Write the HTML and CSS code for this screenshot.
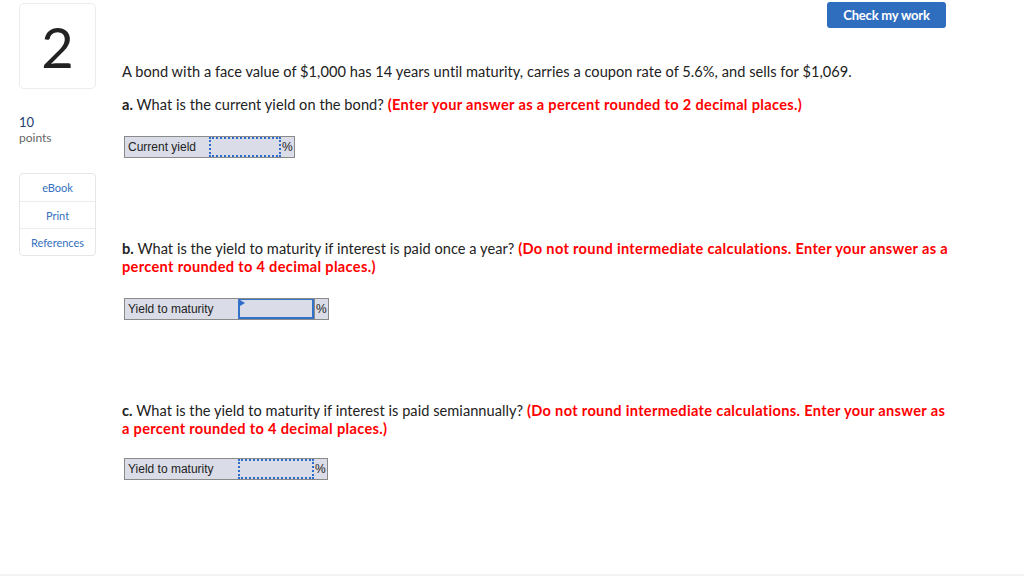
FILE: index.html
```html
<!DOCTYPE html>
<html>
<head>
<meta charset="utf-8">
<link rel="stylesheet" href="styles.css">
</head>
<body>
<div class="page">
  <aside class="side">
    <div class="qnum">2</div>
    <div class="points"><span class="pts-n">10</span><span class="pts-l">points</span></div>
    <div class="tools">
      <div class="tool">eBook</div>
      <div class="tool">Print</div>
      <div class="tool">References</div>
    </div>
  </aside>
  <main class="main">
    <div class="topbar"><button class="check">Check my work</button></div>
    <p class="intro">A bond with a face value of $1,000 has 14 years until maturity, carries a coupon rate of 5.6%, and sells for $1,069.</p>

    <p class="q q-a"><b>a.</b> What is the current yield on the bond? <span class="req">(Enter your answer as a percent rounded to 2 decimal places.)</span></p>
    <div class="answer ans-a">
      <span class="lbl lbl-cy">Current yield</span><span class="inp inp-dot inp-cy"></span><span class="pct">%</span>
    </div>

    <p class="q q-b"><b>b.</b> What is the yield to maturity if interest is paid once a year? <span class="req">(Do not round intermediate calculations. Enter your answer as a percent rounded to 4 decimal places.)</span></p>
    <div class="answer ans-b">
      <span class="lbl lbl-ytm">Yield to maturity</span><span class="inp inp-focus"><span class="flag"></span></span><span class="pct">%</span>
    </div>

    <p class="q q-c"><b>c.</b> What is the yield to maturity if interest is paid semiannually? <span class="req">(Do not round intermediate calculations. Enter your answer as a percent rounded to 4 decimal places.)</span></p>
    <div class="answer ans-c">
      <span class="lbl lbl-ytm">Yield to maturity</span><span class="inp inp-dot"></span><span class="pct">%</span>
    </div>
  </main>
</div>
<div class="footer-line"></div>
</body>
</html>
```
FILE: styles.css
```css
html, body {
  margin: 0;
  padding: 0;
  background: #fff;
  height: 582px;
  overflow: hidden;
  font-family: Lato, "Open Sans", sans-serif;
  color: #222;
}
.page {
  display: flex;
  height: 574px;
}
.side {
  width: 77px;
  margin-left: 19px;
  display: flex;
  flex-direction: column;
}
.qnum {
  margin-top: 3px;
  height: 84px;
  border: 1px solid #ececec;
  border-radius: 5px;
  display: flex;
  align-items: center;
  justify-content: center;
  font-size: 56px;
  font-weight: 400;
  color: #222;
  width: 75px;
}
.points {
  margin-top: 26px;
  display: flex;
  flex-direction: column;
}
.pts-n {
  font-size: 13px;
  color: #1d3f72;
  line-height: 15px;
}
.pts-l {
  font-size: 12px;
  color: #666;
  line-height: 16px;
}
.tools {
  margin-top: 27px;
  border: 1px solid #e6e6e6;
  border-radius: 4px;
  width: 75px;
}
.tool {
  height: 26px;
  display: flex;
  align-items: center;
  justify-content: center;
  font-size: 11px;
  color: #3470be;
  border-top: 1px solid #ececec;
}
.tool:first-child {
  border-top: none;
  height: 27px;
}
.main {
  margin-left: 26px;
  width: 830px;
  display: flex;
  flex-direction: column;
}
.topbar {
  display: flex;
  justify-content: flex-end;
  padding-top: 2px;
  height: 27px;
}
.check {
  width: 119px;
  height: 26px;
  margin-right: 6px;
  background: #2f6dbf;
  color: #fff;
  border: none;
  border-radius: 3px;
  font-family: Lato, sans-serif;
  font-weight: 700;
  font-size: 13px;
  letter-spacing: -0.2px;
  padding: 0;
}
p {
  margin: 0;
  font-size: 14.6px;
  line-height: 18px;
  letter-spacing: 0.04px;
}
.intro {
  margin-top: 34px;
}
.q b {
  font-weight: 700;
}
.req {
  color: #f00;
  font-weight: 700;
  letter-spacing: 0.32px;
}
.q-a {
  margin-top: 15px;
}
.q-b {
  margin-top: 82px;
}
.q-c {
  margin-top: 82px;
}
.answer {
  display: flex;
  align-self: flex-start;
  margin-left: 2px;
  border: 1px solid #8a8a8a;
  background: #dadde8;
  height: 20px;
  font-family: "Liberation Sans", Arial, sans-serif;
  font-size: 12px;
  color: #222;
}
.ans-a { margin-top: 22px; }
.ans-b { margin-top: 22px; }
.ans-c { margin-top: 20px; }
.lbl {
  display: flex;
  align-items: center;
  padding-left: 3px;
}
.lbl-cy { width: 81px; }
.lbl-ytm { width: 110px; }
.inp {
  position: relative;
  box-sizing: border-box;
  height: 20px;
  background: #dadde8;
}
.inp-dot {
  width: 76px;
  border: 2px dotted #2e6ccc;
}
.inp-cy {
  width: 72px;
}
.inp-focus {
  width: 76px;
  border: 2px solid #3273c9;
  border-top-width: 1px;
}
.flag {
  position: absolute;
  left: 0;
  top: 0;
  width: 0;
  height: 0;
  border-top: 3px solid transparent;
  border-bottom: 3px solid transparent;
  border-left: 5px solid #2e6ccc;
}
.pct {
  display: flex;
  align-items: center;
  padding: 0 1px 0 1px;
}
.inp-focus + .pct { border-left: 1px solid #8a8a8a; }
.footer-line {
  height: 2px;
  background: #f3f3f3;
}
```
